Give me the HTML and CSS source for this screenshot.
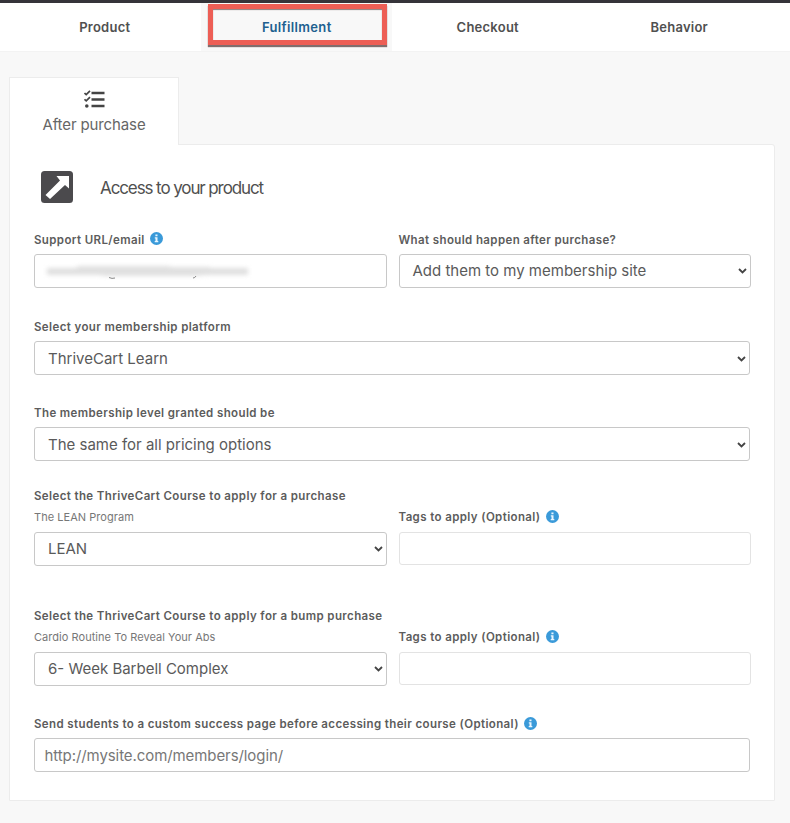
FILE: index.html
```html
<!DOCTYPE html>
<html lang="en">
<head>
<meta charset="utf-8">
<title>Product fulfillment</title>
<link rel="stylesheet" href="styles.css">
</head>
<body>
<svg class="defs" aria-hidden="true">
  <symbol id="info" viewBox="0 0 13 13"><circle cx="6.5" cy="6.5" r="6.5" fill="#3a9ad9"/><path d="M5.4 2.5h2.1v1.7H5.4zM4.8 5.2h2.7v3.9h.8v1.2H4.7V9.1h.8V6.4h-.7z" fill="#e9f6ff"/></symbol>
  <symbol id="chevron" viewBox="0 0 9 6"><path d="M1 1l3.5 3.5L8 1" fill="none" stroke="#444" stroke-width="1.8"/></symbol>
</svg>
<nav class="nav">
  <a class="nav-item">Product</a>
  <a class="nav-item active"><span class="highlight">Fulfillment</span></a>
  <a class="nav-item">Checkout</a>
  <a class="nav-item">Behavior</a>
</nav>
<main class="content">
  <div class="tab">
    <svg class="tab-icon" viewBox="0 0 21 18"><g fill="none" stroke="#444"><path d="M7.5 3H20.500M7.500 9.500H20.500M7.500 16H20.500" stroke-width="2.300"/><path d="M.5 3l1.700 1.600L6 .8M.5 9.300l1.700 1.600L6 7.100" stroke-width="1.700"/></g><circle cx="2.800" cy="16" r="1.800" fill="#444"/></svg>
    <span class="tab-text">After purchase</span>
  </div>
  <section class="panel">
    <header class="head">
      <svg class="head-icon" viewBox="0 0 32 32"><rect width="32" height="32" rx="3.500" fill="#4b4a4d"/><path d="M15.500 5H28v12.500l-4-3.500L9 28l-4.500-4L19 9.500z" fill="#fff"/></svg>
      <h1 class="title">Access to your product</h1>
    </header>
    <div class="row r1">
      <div class="field">
        <div class="label"><span>Support URL/email</span><svg class="info"><use href="#info"/></svg></div>
        <div class="control input"><svg class="masked" viewBox="0 0 205 18"><path class="smudge" d="M2 6h30V4h90l6 1h35l4 1h36v7h-40l-15 1H60l-6-1H2z"/><path class="tails" d="M64 15.500q3 1.500 6 .5M148 16q2 0 3-2"/></svg></div>
      </div>
      <div class="field">
        <div class="label"><span>What should happen after purchase?</span></div>
        <div class="control select"><span>Add them to my membership site</span><svg class="chevron"><use href="#chevron"/></svg></div>
      </div>
    </div>
    <div class="field r2">
      <div class="label"><span>Select your membership platform</span></div>
      <div class="control select low"><span>ThriveCart Learn</span><svg class="chevron"><use href="#chevron"/></svg></div>
    </div>
    <div class="field r3">
      <div class="label"><span>The membership level granted should be</span></div>
      <div class="control select low"><span>The same for all pricing options</span><svg class="chevron"><use href="#chevron"/></svg></div>
    </div>
    <div class="row r4">
      <div class="field">
        <div class="label"><span>Select the ThriveCart Course to apply for a purchase</span></div>
        <div class="sub">The LEAN Program</div>
        <div class="control select"><span>LEAN</span><svg class="chevron"><use href="#chevron"/></svg></div>
      </div>
      <div class="field">
        <div class="label"><span>Tags to apply (Optional)</span><svg class="info"><use href="#info"/></svg></div>
        <div class="control tags"></div>
      </div>
    </div>
    <div class="row r5">
      <div class="field">
        <div class="label"><span>Select the ThriveCart Course to apply for a bump purchase</span></div>
        <div class="sub">Cardio Routine To Reveal Your Abs</div>
        <div class="control select"><span>6- Week Barbell Complex</span><svg class="chevron"><use href="#chevron"/></svg></div>
      </div>
      <div class="field">
        <div class="label"><span>Tags to apply (Optional)</span><svg class="info"><use href="#info"/></svg></div>
        <div class="control tags"></div>
      </div>
    </div>
    <div class="field r6">
      <div class="label"><span>Send students to a custom success page before accessing their course (Optional)</span><svg class="info"><use href="#info"/></svg></div>
      <div class="control input low"><span class="placeholder">http://mysite.com/members/login/</span></div>
    </div>
  </section>
</main>
</body>
</html>
```
FILE: styles.css
```css
* { box-sizing: border-box; }
body { margin: 0; background: #f8f8f8; color: #555; font-family: Inter, "Liberation Sans", sans-serif; }
.defs { display: none; }
.nav { display: grid; grid-template-columns: 9px 191.5px 191.5px 191.5px 191.5px; height: 52px; border-top: 3px solid #35343a; border-bottom: 1px solid #f3f3f3; background: #fff; overflow: hidden; }
.nav::before { content: ""; }
.nav-item { display: flex; justify-content: center; height: 48px; line-height: 48px; font-size: 13px; font-weight: 600; letter-spacing: .25px; color: #505050; }
.nav-item.active { height: 49px; background: #f8f8f8; color: #20608f; padding: 1px 0 0 2px; letter-spacing: .35px; }
.highlight { width: 179px; height: 41px; line-height: 37px; padding-right: 1px; text-align: center; border: 5px solid #ed5e55; box-shadow: 0 2px 1px #806e6e, inset 0 1px 1px #8a7d7d; }
.content { padding: 25px 15px 22px 9px; }
.tab { display: flex; flex-direction: column; align-items: center; width: 170px; height: 68px; margin-bottom: -1px; padding-top: 12px; background: #fff; border: 1px solid #ececec; border-bottom: 0; position: relative; }
.tab-icon { width: 21px; height: 18px; }
.tab-text { margin-top: 7px; font-size: 15px; line-height: 20px; letter-spacing: -.12px; color: #666; }
.panel { height: 657px; padding: 0 24px; background: #fff; border: 1px solid #ececec; border-radius: 0 3px 0 0; }
.head { display: flex; align-items: center; height: 87px; padding: 0 0 3px 6.5px; }
.head-icon { width: 32px; height: 32px; }
.title { margin: 0 0 0 27.5px; padding-top: 2px; font-size: 17px; font-weight: 400; letter-spacing: -1.1px; color: #505050; }
.row { display: grid; grid-template-columns: 352.5px 352px; gap: 12px; align-items: start; }
.label { display: flex; align-items: center; gap: 5.5px; height: 16px; margin-bottom: 6px; font-size: 11.5px; font-weight: 600; line-height: 16px; letter-spacing: .385px; color: #5c5c5c; white-space: nowrap; }
.info { width: 13px; height: 13px; margin-top: -2px; }
.sub { height: 16px; margin: -1px 0 7px; font-size: 11px; line-height: 16px; letter-spacing: .04px; color: #777; }
.control { display: flex; align-items: center; height: 34px; border: 1px solid #c8c8c8; border-radius: 3px; background: #fff; font-size: 15px; line-height: 18px; color: #5a5a5a; white-space: nowrap; }
.r1 .label .info { margin-top: -3px; }
.select { justify-content: space-between; padding: 0 3px 1px 13px; }
.input { padding-left: 9.5px; }
.control.low { padding-top: 1px; padding-bottom: 0; }
.chevron { width: 9px; height: 6px; }
.tags { border-color: #e3e3e3; height: 33px; }
.placeholder { color: #777; letter-spacing: -.08px; }
.masked { width: 205px; height: 18px; overflow: visible; }
.smudge { fill: #e0e0e0; filter: blur(2px); }
.tails { fill: none; stroke: #888; stroke-width: 1; }
.r2 { margin-top: 31px; }
.r3 { margin-top: 30px; }
.r4 { margin-top: 27px; }
.r5 { margin-top: 42px; }
.r4 .field + .field, .r5 .field + .field { padding-top: 21px; }
.r4 .field + .field .label, .r5 .field + .field .label { margin-bottom: 7px; }
.r6 { margin-top: 30px; }
```
